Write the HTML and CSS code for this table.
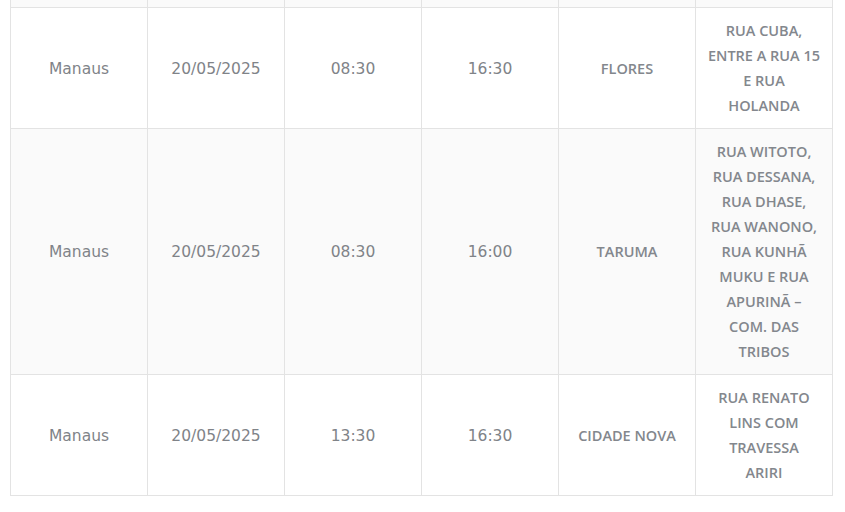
FILE: index.html
```html
<!DOCTYPE html>
<html lang="pt-BR">
<head>
<meta charset="utf-8">
<title>Agenda</title>
<link rel="stylesheet" href="styles.css">
</head>
<body>
<div class="wrap">
<table class="agenda">
<tbody>
<tr class="row-cut">
<td></td><td></td><td></td><td></td><td></td><td></td>
</tr>
<tr>
<td>Manaus</td><td>20/05/2025</td><td>08:30</td><td>16:30</td><td class="up">FLORES</td><td class="up">RUA CUBA,<br>ENTRE A RUA 15<br>E RUA<br>HOLANDA</td>
</tr>
<tr class="alt">
<td>Manaus</td><td>20/05/2025</td><td>08:30</td><td>16:00</td><td class="up">TARUMA</td><td class="up">RUA WITOTO,<br>RUA DESSANA,<br>RUA DHASE,<br>RUA WANONO,<br>RUA KUNHÃ<br>MUKU E RUA<br>APURINÃ –<br>COM. DAS<br>TRIBOS</td>
</tr>
<tr>
<td>Manaus</td><td>20/05/2025</td><td>13:30</td><td>16:30</td><td class="up">CIDADE NOVA</td><td class="up">RUA RENATO<br>LINS COM<br>TRAVESSA<br>ARIRI</td>
</tr>
</tbody>
</table>
</div>
</body>
</html>
```
FILE: styles.css
```css
html, body {
  margin: 0;
  padding: 0;
  background: #ffffff;
}
.wrap {
  padding: 0 12px 0 10px;
}
.agenda {
  width: 823px;
  border-collapse: collapse;
  table-layout: fixed;
  font-family: "DejaVu Sans", "Open Sans", sans-serif;
  font-size: 15.5px;
  line-height: 25px;
  color: #808388;
}
.agenda td {
  border: 1px solid #e3e3e3;
  padding: 11px 10px 9px;
  text-align: center;
  vertical-align: middle;
  font-weight: 400;
}
.agenda td.up {
  font-family: "Open Sans", "Liberation Sans", sans-serif;
  font-size: 14.5px;
  font-weight: 600;
  color: #83878d;
  padding: 10px 10px;
}
.row-cut td {
  border-top: none;
  padding: 0;
  height: 7px;
  background: #fafafa;
}
.alt td {
  background: #fafafa;
}
```
